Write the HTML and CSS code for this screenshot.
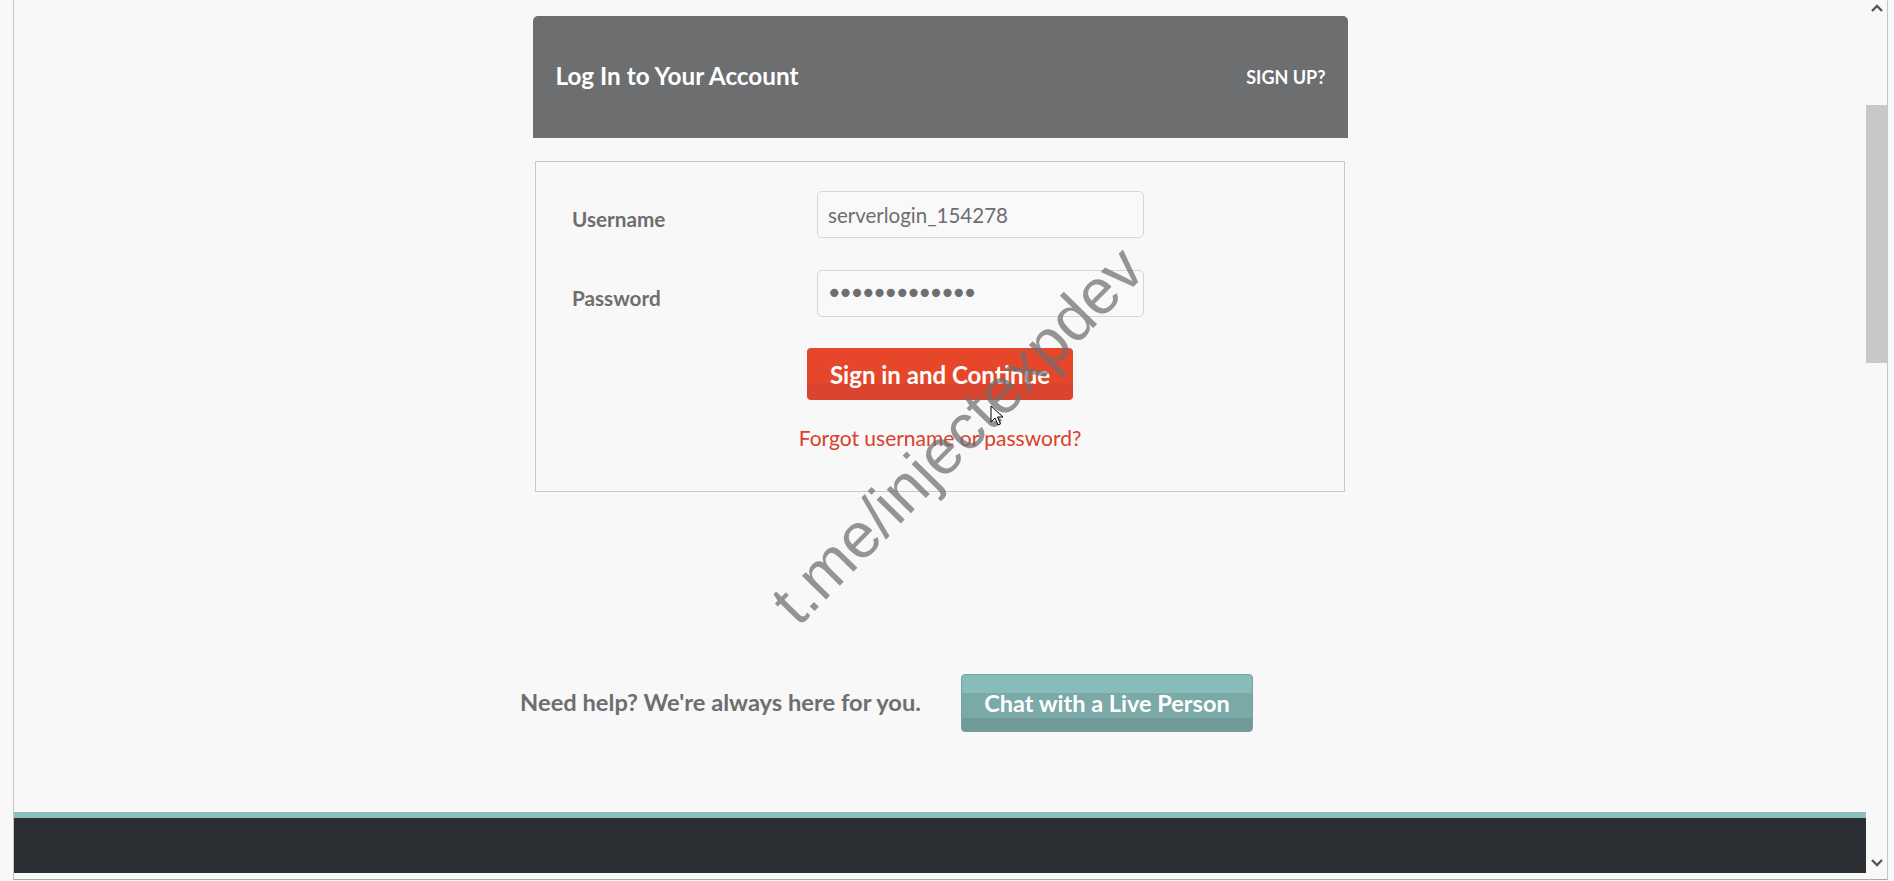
FILE: index.html
```html
<!DOCTYPE html>
<html lang="en">
<head>
<meta charset="utf-8">
<title>Log In to Your Account</title>
<link rel="stylesheet" href="styles.css">
</head>
<body>
<div class="window">
  <div class="viewport">
    <main class="login">
      <div class="login-head">
        <h1 class="login-title">Log In to Your Account</h1>
        <a class="signup" href="#">SIGN UP?</a>
      </div>
      <form class="login-box">
        <div class="fields">
          <label class="field-label" for="user">Username</label>
          <input class="field-input" id="user" type="text" value="serverlogin_154278">
          <label class="field-label" for="pass">Password</label>
          <input class="field-input field-pass" id="pass" type="password" value="abcdefghijklm">
        </div>
        <button class="btn-signin" type="button">Sign in and Continue</button>
        <a class="forgot" href="#">Forgot username or password?</a>
      </form>
    </main>
    <div class="help">
      <span class="help-text">Need help? We're always here for you.</span>
      <button class="btn-chat" type="button">Chat with a Live Person</button>
    </div>
    <footer class="footer"></footer>
  </div>
  <div class="scrollbar">
    <svg class="sb-arrow" width="14" height="10" viewBox="0 0 14 10"><path d="M2 8 L7 3 L12 8" fill="none" stroke="#555" stroke-width="2.4"/></svg>
    <div class="sb-track"><div class="sb-thumb"></div></div>
    <svg class="sb-arrow" width="14" height="10" viewBox="0 0 14 10"><path d="M2 2 L7 7 L12 2" fill="none" stroke="#555" stroke-width="2.4"/></svg>
  </div>
</div>
<div class="watermark">t.me/injectexpdev</div>
<svg class="cursor" width="14" height="22" viewBox="0 0 14 22"><path d="M1 1 L1 17 L5 13 L8 20 L10.5 19 L7.5 12 L13 12 Z" fill="#fff" stroke="#000" stroke-width="1"/></svg>
</body>
</html>
```
FILE: styles.css
```css
* { box-sizing: border-box; }
html, body { margin: 0; padding: 0; }
body {
  width: 1894px;
  height: 881px;
  overflow: hidden;
  background: #f8f8f8;
  font-family: Lato, "Open Sans", sans-serif;
  position: relative;
}
.window {
  margin-left: 13px;
  width: 1875px;
  height: 880px;
  border-left: 1px solid #c6c6c6;
  border-right: 1px solid #c6c6c6;
  border-bottom: 1px solid #a9a9a9;
  display: flex;
}
.viewport {
  flex: 1;
  display: flex;
  flex-direction: column;
}
.login {
  width: 815px;
  margin: 16px auto 0;
  display: flex;
  flex-direction: column;
  align-items: center;
}
.login-head {
  width: 815px;
  height: 122px;
  background: #6d6e70;
  border-radius: 5px 5px 0 0;
  display: flex;
  align-items: center;
  justify-content: space-between;
  padding: 0 22px 0 23px;
}
.login-title {
  margin: 0;
  padding-bottom: 4px;
  color: #fff;
  font-size: 24.3px;
  font-weight: 700;
}
.signup {
  color: #fff;
  text-decoration: none;
  font-size: 18px;
  font-weight: 700;
}
.login-box {
  width: 810px;
  height: 331px;
  margin: 23px 0 0;
  border: 1px solid #c8c8c8;
  padding: 29px 0 0 36px;
  display: flex;
  flex-direction: column;
}
.fields {
  display: grid;
  grid-template-columns: 245px 327px;
  row-gap: 32px;
  align-items: center;
}
.field-label {
  color: #6d6e70;
  font-size: 20.7px;
  font-weight: 700;
  padding-top: 8px;
}
.field-input {
  height: 47px;
  width: 327px;
  border: 1px solid #d6d6d6;
  border-radius: 5px;
  background: #f9f9f9;
  padding: 0 10px;
  font-family: Lato, sans-serif;
  font-size: 20.5px;
  color: #6d6e70;
  outline: none;
}
.field-pass {
  font-family: "DejaVu Sans", sans-serif;
  font-size: 28px;
  letter-spacing: -5.2px;
  color: #6d6e70;
  padding-left: 8px;
}
.btn-signin {
  align-self: center;
  margin: 31px 36px 0 0;
  width: 266px;
  height: 52px;
  border: 0;
  border-radius: 4px;
  background: linear-gradient(#e6472b 0, #e6472b 67%, #da4530 67%, #da4530 100%);
  color: #fff;
  font-family: Lato, sans-serif;
  font-size: 24px;
  font-weight: 700;
  padding: 0;
}
.forgot {
  align-self: center;
  margin: 25px 36px 0 0;
  color: #d9412c;
  text-decoration: none;
  font-size: 21px;
}
.help {
  margin-top: 182px;
  display: flex;
  align-items: center;
  justify-content: center;
  gap: 40px;
  padding-right: 107px;
}
.help-text {
  color: #6d6e70;
  font-size: 23.7px;
  font-weight: 700;
  padding-bottom: 3px;
}
.btn-chat {
  width: 292px;
  height: 58px;
  border: 1px solid #73a09e;
  border-radius: 4px;
  background: linear-gradient(#87bcba 0, #87bcba 33%, #7aa9a7 33%, #7aa9a7 76%, #6f9a98 76%, #6f9a98 100%);
  color: #fff;
  font-family: Lato, sans-serif;
  font-size: 23.5px;
  font-weight: 700;
  padding: 0;
}
.footer {
  margin-top: 80px;
  height: 61px;
  border-top: 6px solid #89c1c1;
  background: #2b2f33;
}
.scrollbar {
  width: 21px;
  display: flex;
  flex-direction: column;
  align-items: center;
}
.sb-arrow {
  margin-top: 3px;
  margin-left: 1px;
  flex: none;
}
.sb-track {
  flex: 1;
  width: 21px;
  position: relative;
}
.sb-thumb {
  margin-top: 92px;
  height: 258px;
  width: 21px;
  background: #c8c8c8;
}
.scrollbar .sb-arrow:last-child {
  margin: 0 0 11px 1px;
}
.watermark {
  position: absolute;
  left: 957px;
  top: 435px;
  transform: translate(-50%, -50%) rotate(-45.5deg);
  font-family: "Liberation Sans", Arial, sans-serif;
  font-size: 64px;
  color: rgba(110, 110, 110, 0.72);
  white-space: nowrap;
  line-height: 1;
}
.cursor {
  position: absolute;
  left: 990px;
  top: 405px;
}
```
